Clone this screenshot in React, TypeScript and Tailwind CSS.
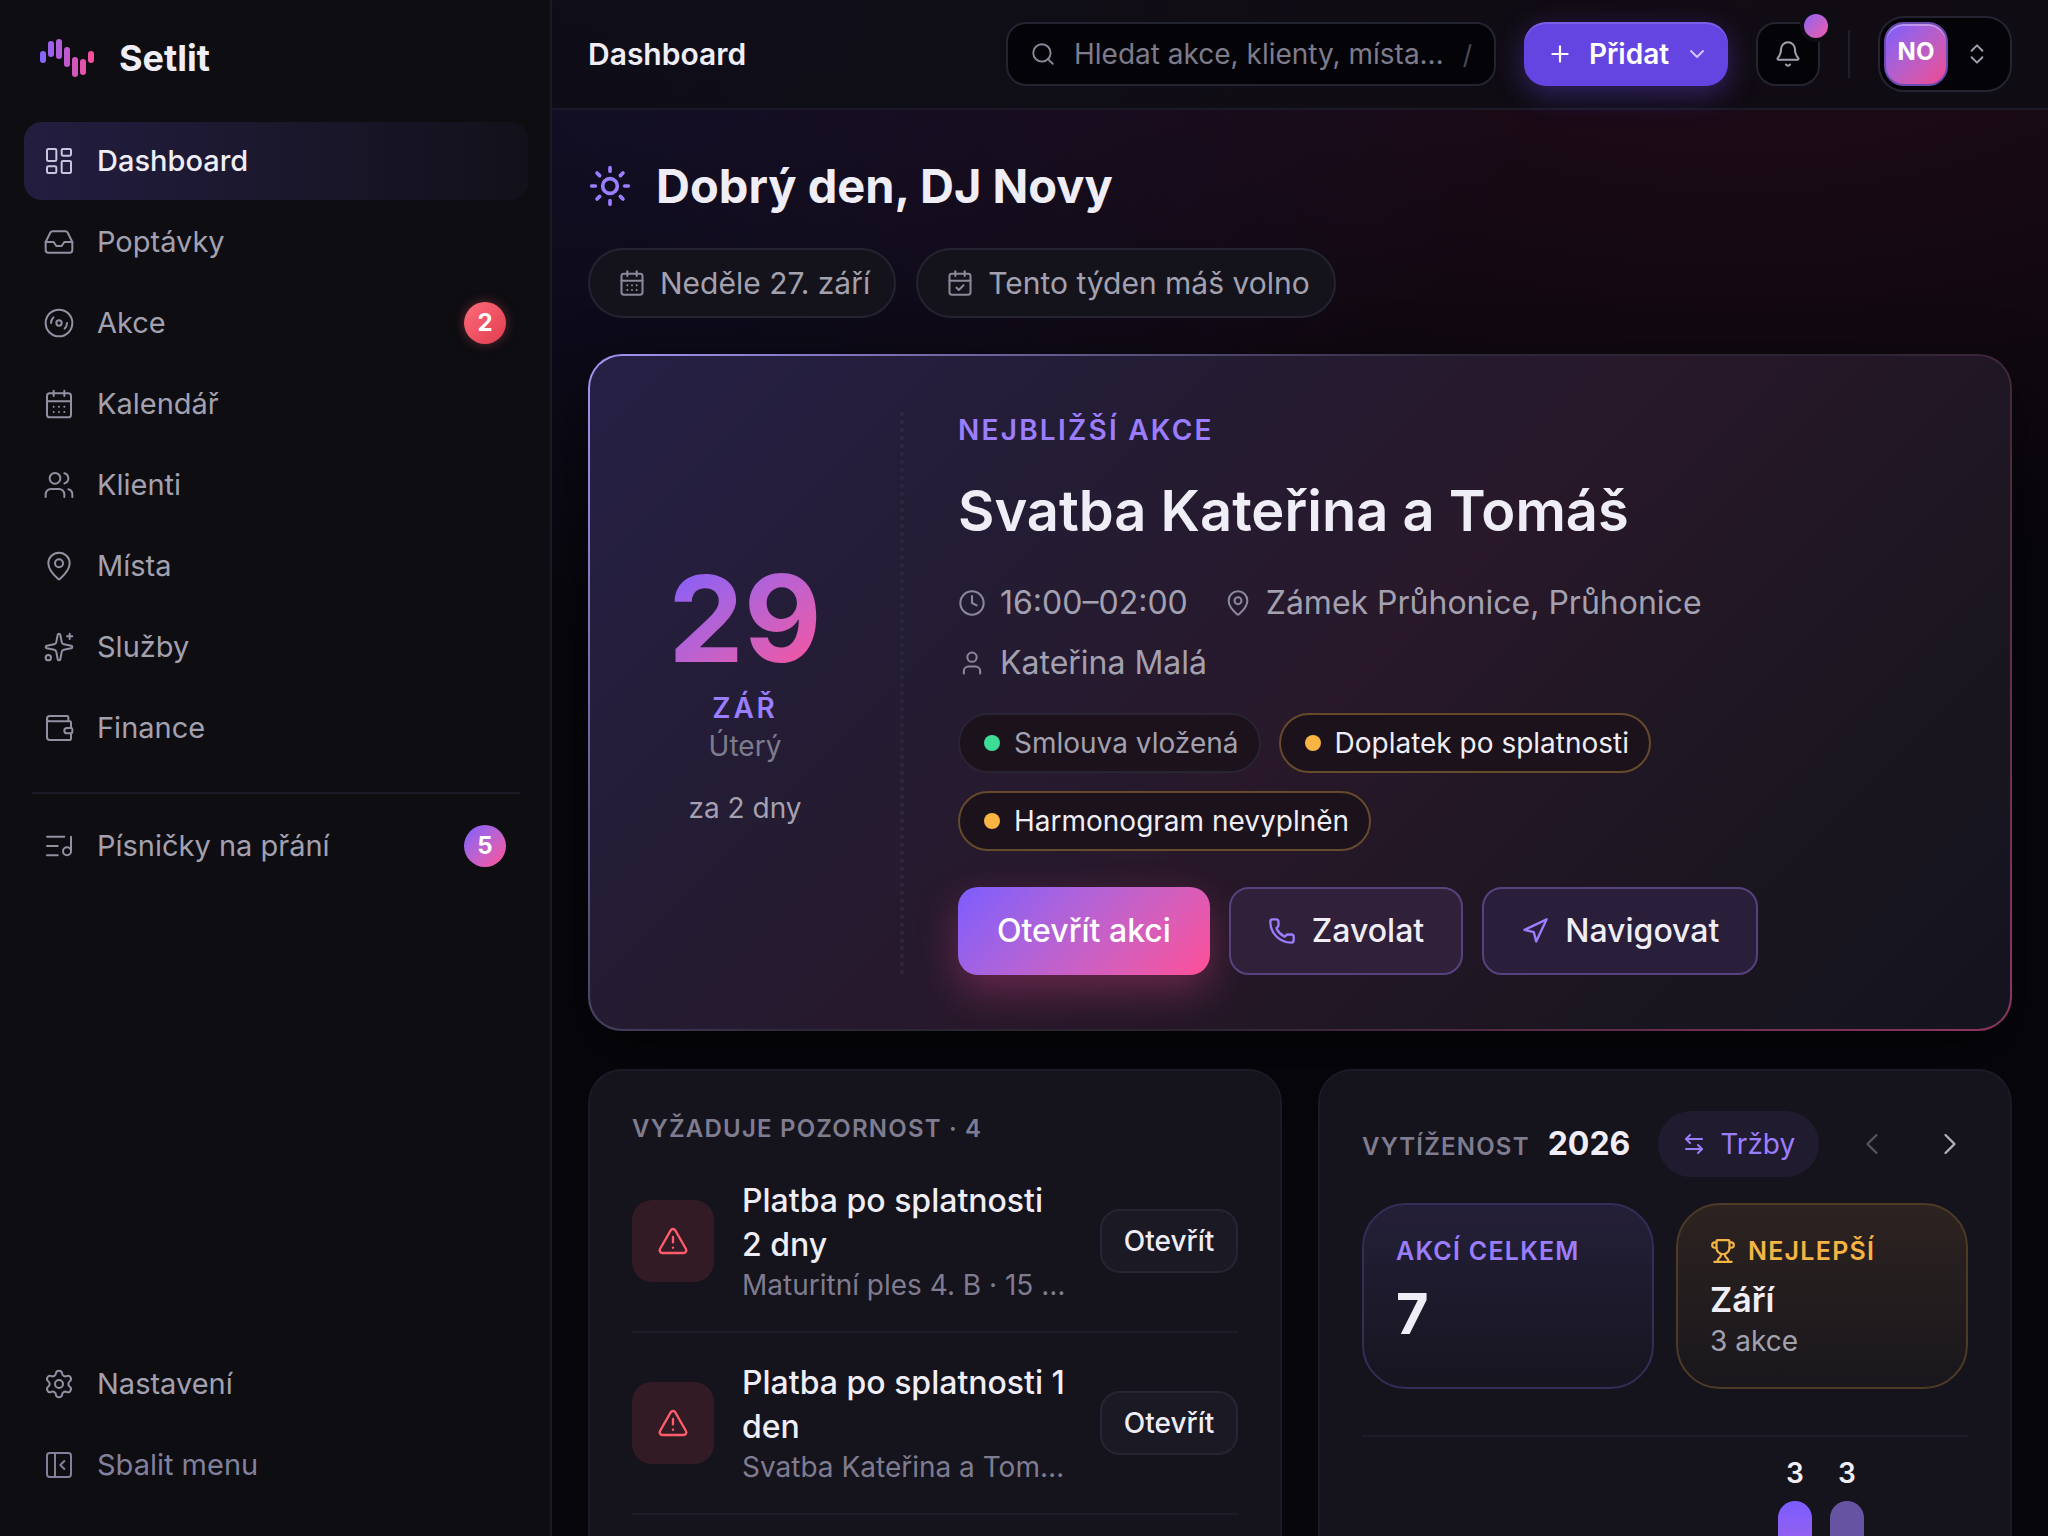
import type { ReactNode } from "react";
import {
  ArrowLeftRight,
  Bell,
  CalendarCheck,
  CalendarDays,
  ChevronDown,
  ChevronLeft,
  ChevronRight,
  ChevronsUpDown,
  Clock,
  Disc3,
  Inbox,
  LayoutDashboard,
  ListMusic,
  MapPin,
  Navigation,
  PanelLeftClose,
  Phone,
  Plus,
  Search,
  Settings,
  Sparkles,
  Sun,
  TriangleAlert,
  Trophy,
  User,
  Users,
  Wallet,
  type LucideIcon,
} from "lucide-react";

type NavEntry = {
  label: string;
  icon: LucideIcon;
  active?: boolean;
  badge?: number;
  badgeClass?: string;
};

const mainNav: NavEntry[] = [
  { label: "Dashboard", icon: LayoutDashboard, active: true },
  { label: "Poptávky", icon: Inbox },
  {
    label: "Akce",
    icon: Disc3,
    badge: 2,
    badgeClass:
      "bg-linear-to-br from-[#ff6b78] to-[#e03c50] shadow-[0_0_12px_rgba(255,92,108,0.35)]",
  },
  { label: "Kalendář", icon: CalendarDays },
  { label: "Klienti", icon: Users },
  { label: "Místa", icon: MapPin },
  { label: "Služby", icon: Sparkles },
  { label: "Finance", icon: Wallet },
];

const songsNav: NavEntry = {
  label: "Písničky na přání",
  icon: ListMusic,
  badge: 5,
  badgeClass: "bg-linear-to-br from-[#7c5cff] to-[#ff4d97]",
};

const alerts = [
  { id: 1, title: "Platba po splatnosti 2\u00a0dny", note: "Maturitní ples 4. B · 15 000 Kč" },
  { id: 2, title: "Platba po splatnosti 1 den", note: "Svatba Kateřina a Tomáš · 12 000 Kč" },
];

const months = [0, 0, 0, 0, 0, 0, 0, 0, 3, 3, 0, 1];

const LogoMark = () => (
  <svg width="54" height="40" viewBox="0 0 54 40" aria-hidden="true">
    <defs>
      <linearGradient id="logo" x1="0" y1="0" x2="54" y2="0" gradientUnits="userSpaceOnUse">
        <stop stopColor="#8467ff" />
        <stop offset="1" stopColor="#ff4d97" />
      </linearGradient>
    </defs>
    <g fill="url(#logo)">
      <rect x="0" y="13" width="6" height="12" rx="3" />
      <rect x="8" y="3" width="6" height="16" rx="3" />
      <rect x="16" y="1" width="6" height="20" rx="3" />
      <rect x="24" y="9" width="6" height="20" rx="3" />
      <rect x="32" y="19" width="6" height="20" rx="3" />
      <rect x="40" y="21" width="6" height="16" rx="3" />
      <rect x="48" y="13" width="6" height="12" rx="3" />
    </g>
  </svg>
);

const NavLink = ({ label, icon: Icon, active, badge, badgeClass }: NavEntry) => (
  <a
    href="#"
    className={`flex h-[78px] items-center gap-[22px] rounded-[18px] px-[19px] text-[29px] ${
      active
        ? "bg-linear-to-r from-[#231d40] to-[#12111a] font-medium text-[#efedf6]"
        : "text-[#a3a1b0]"
    }`}
  >
    <Icon size={32} strokeWidth={1.5} className={active ? "text-[#c9c5dc]" : "text-[#9290a1]"} />
    <span className="flex-1">{label}</span>
    {badge && (
      <span
        className={`mr-[3px] flex size-[42px] items-center justify-center rounded-full text-[24px] font-bold text-white ${badgeClass}`}
      >
        {badge}
      </span>
    )}
  </a>
);

const Sidebar = () => (
  <aside className="flex w-[552px] shrink-0 flex-col border-r-2 border-[#1a1926] bg-[#0d0d12] pr-[22px] pb-8 pl-6">
    <div className="flex h-[122px] items-center gap-[25px] px-4 pb-1.5">
      <LogoMark />
      <span className="text-[36px] font-bold text-[#efedf6]">Setlit</span>
    </div>
    <nav className="flex flex-1 flex-col gap-[3px]">
      {mainNav.map((item) => (
        <NavLink key={item.label} {...item} />
      ))}
      <hr className="mx-2 mt-[22px] mb-2.5 border-t-2 border-[#1a1926]" />
      <NavLink {...songsNav} />
    </nav>
    <div className="flex flex-col gap-[3px]">
      <NavLink label="Nastavení" icon={Settings} />
      <button
        type="button"
        className="flex h-[78px] items-center gap-[22px] px-[19px] text-[29px] text-[#82809a]"
      >
        <PanelLeftClose size={32} strokeWidth={1.5} />
        Sbalit menu
      </button>
    </div>
  </aside>
);

const Topbar = () => (
  <header className="flex h-[110px] shrink-0 items-center border-b-2 border-[#1c1a28] bg-[#0e0d13]/75 px-9">
    <p className="flex-1 text-[30px] font-semibold text-[#efedf6]">Dashboard</p>
    <label className="flex h-16 w-[490px] items-center gap-[18px] rounded-[20px] border-2 border-[#242330] bg-[#040307] px-[22px]">
      <Search size={26} strokeWidth={1.75} className="shrink-0 text-[#8a889b]" />
      <input
        type="text"
        aria-label="Hledat"
        placeholder="Hledat akce, klienty, místa…"
        className="min-w-0 flex-1 bg-transparent text-[28px] text-[#efedf6] outline-none placeholder:text-[#7d7b8c]"
      />
      <kbd className="font-[Inter,sans-serif] text-[26px] text-[#4c4a59]">/</kbd>
    </label>
    <button
      type="button"
      className="ml-7 flex h-16 w-[204px] items-center justify-center gap-4 rounded-[22px] bg-[#6445e2] pl-1 text-[28px] font-semibold text-white shadow-[inset_0_2px_0_rgba(255,255,255,0.15),0_8px_28px_rgba(100,69,226,0.4)]"
    >
      <Plus size={26} strokeWidth={2} />
      Přidat
      <ChevronDown size={24} strokeWidth={2} className="text-[#cfc6ff]" />
    </button>
    <button
      type="button"
      aria-label="Oznámení"
      className="relative ml-7 flex size-16 items-center justify-center rounded-[20px] border-2 border-[#242330] bg-[#040307] text-[#a3a1b0]"
    >
      <Bell size={28} strokeWidth={1.75} />
      <span className="absolute -top-[14px] -right-[14px] size-8 rounded-full border-4 border-[#0e0c14] bg-linear-to-br from-[#7c5cff] to-[#ff4d97] bg-origin-border" />
    </button>
    <span className="mx-7 h-12 w-0.5 bg-[#1f1e2a]" />
    <button
      type="button"
      aria-label="Účet"
      className="flex h-[76px] items-center gap-4 rounded-[26px] border-2 border-[#242330] bg-[#040307] pr-5 pl-1"
    >
      <span className="flex size-16 items-center justify-center rounded-[20px] border-2 border-[#6a4bb0] bg-linear-to-br from-[#7c5cff] to-[#f0458f] pb-1 text-[24px] font-bold text-white shadow-[inset_0_2px_0_rgba(255,255,255,0.35)]">
        NO
      </span>
      <ChevronsUpDown size={26} strokeWidth={1.75} className="text-[#a3a1b0]" />
    </button>
  </header>
);

const InfoChip = ({ icon: Icon, children }: { icon: LucideIcon; children: ReactNode }) => (
  <span className="flex h-[70px] items-center gap-[14px] rounded-full border-2 border-[#252331] bg-[#14131b] pr-6 pl-7 text-[30px] text-[#a3a1b0]">
    <Icon size={28} strokeWidth={1.75} className="text-[#8a889b]" />
    {children}
  </span>
);

const Meta = ({ icon: Icon, children }: { icon: LucideIcon; children: ReactNode }) => (
  <span className="flex items-center gap-[14px]">
    <Icon size={28} strokeWidth={1.75} className="text-[#8a889b]" />
    {children}
  </span>
);

const StatusPill = ({ ok, children }: { ok?: boolean; children: ReactNode }) => (
  <span
    className={`flex h-[60px] items-center gap-[14px] rounded-full border-2 bg-[#1b121c] pr-5 pl-6 text-[28px] ${
      ok ? "border-[#282434] text-[#a3a1b0]" : "border-[#664a2b] text-[#efedf6]"
    }`}
  >
    <span className={`size-4 rounded-full ${ok ? "bg-[#3ddc97]" : "bg-[#f8b544]"}`} />
    {children}
  </span>
);

const NextEvent = () => (
  <section className="flex rounded-[34px] border-2 border-transparent bg-[linear-gradient(135deg,#262046_0%,#241c33_30%,#28182a_52%,#1b1620_78%,#14141e_100%),linear-gradient(135deg,#a594f2_0%,#2b2838_42%,#2b2432_60%,#8f3563_100%)] bg-origin-border px-14 pt-14 pb-[54px] shadow-[0_20px_60px_rgba(0,0,0,0.5)] [background-clip:padding-box,border-box]">
    <div className="flex w-[258px] shrink-0 flex-col items-center justify-center border-r-4 border-dotted border-[#2a2a3c] pr-14">
      <span className="bg-linear-to-br from-[#7c5cff] to-[#ff4d97] bg-clip-text text-[120px] leading-[116px] font-bold text-transparent">
        29
      </span>
      <span className="mt-3 text-[28px] leading-[38px] font-semibold tracking-widest text-[#9b7dff]">
        ZÁŘ
      </span>
      <span className="text-[28px] leading-[38px] text-[#7d7b8c]">Úterý</span>
      <span className="mt-6 text-[28px] leading-[38px] text-[#a3a1b0]">za 2 dny</span>
    </div>
    <div className="flex min-w-0 flex-1 flex-col pl-[54px]">
      <p className="text-[28px] leading-9 font-semibold tracking-[0.08em] text-[#9b7dff]">
        NEJBLIŽŠÍ AKCE
      </p>
      <h2 className="mt-7 text-[56px] leading-[70px] font-semibold text-[#efedf6]">
        Svatba Kateřina a Tomáš
      </h2>
      <div className="mt-[35px] flex max-w-[820px] flex-wrap gap-x-9 gap-y-4 text-[32px] leading-[44px] text-[#a3a1b0]">
        <Meta icon={Clock}>16:00–02:00</Meta>
        <Meta icon={MapPin}>Zámek Průhonice, Průhonice</Meta>
        <Meta icon={User}>Kateřina Malá</Meta>
      </div>
      <div className="mt-7 flex max-w-[820px] flex-wrap gap-[18px]">
        <StatusPill ok>Smlouva vložená</StatusPill>
        <StatusPill>Doplatek po splatnosti</StatusPill>
        <StatusPill>Harmonogram nevyplněn</StatusPill>
      </div>
      <div className="mt-9 flex gap-[19px] text-[32px] font-medium">
        <button
          type="button"
          className="h-[88px] rounded-[20px] bg-linear-135 from-[#7c5cff] to-[#ff4d97] px-[39px] text-white shadow-[0_16px_40px_rgba(255,77,151,0.3)]"
        >
          Otevřít akci
        </button>
        <button
          type="button"
          className="flex h-[88px] items-center gap-4 rounded-[20px] border-2 border-[#57427e] bg-[#30203a] px-[37px] text-[#efedf6]"
        >
          <Phone size={28} strokeWidth={2} className="text-[#9b7dff]" />
          Zavolat
        </button>
        <button
          type="button"
          className="flex h-[88px] items-center gap-4 rounded-[20px] border-2 border-[#55427e] bg-[#2a1f3a] px-[37px] text-[#efedf6]"
        >
          <Navigation size={28} strokeWidth={2} className="text-[#9b7dff]" />
          Navigovat
        </button>
      </div>
    </div>
  </section>
);

const Attention = () => (
  <section className="rounded-[34px] border-2 border-[#1c1a27] bg-[#15131c] px-[42px] pt-10">
    <h3 className="text-[24px] leading-9 font-semibold tracking-wider text-[#7f7c90]">
      VYŽADUJE POZORNOST · 4
    </h3>
    <ul className="mt-1">
      {alerts.map((a) => (
        <li key={a.id} className="flex items-center gap-7 border-b-2 border-[#1d1b27] py-7">
          <span className="flex size-[82px] shrink-0 items-center justify-center rounded-[20px] bg-[#321b24] text-[#ff5c6c]">
            <TriangleAlert size={32} strokeWidth={1.75} />
          </span>
          <div className="min-w-0 flex-1">
            <p className="text-[32px] leading-[44px] font-medium text-[#efedf6]">{a.title}</p>
            <p className="truncate text-[28px] leading-9 text-[#7f7c90]">{a.note}</p>
          </div>
          <button
            type="button"
            className="h-16 w-[138px] shrink-0 rounded-[20px] border-2 border-[#272533] bg-[#1b1924] text-[28px] font-medium text-[#efedf6]"
          >
            Otevřít
          </button>
        </li>
      ))}
    </ul>
  </section>
);

const Workload = () => (
  <section className="rounded-[34px] border-2 border-[#1c1a27] bg-[#15131c] px-[42px] pt-10">
    <div className="flex h-[66px] items-center">
      <div className="flex items-baseline gap-[18px]">
        <h3 className="text-[24px] font-semibold tracking-wider text-[#7f7c90]">VYTÍŽENOST</h3>
        <span className="text-[32px] font-bold text-[#efedf6]">2026</span>
      </div>
      <button
        type="button"
        className="ml-7 flex h-[66px] items-center gap-[14px] rounded-full bg-[#211b30] px-6 text-[28px] text-[#9b7dff]"
      >
        <ArrowLeftRight size={24} strokeWidth={2} />
        Tržby
      </button>
      <div className="ml-auto flex gap-[42px]">
        <button type="button" aria-label="Předchozí rok" className="flex w-9 justify-center text-[#55535f]">
          <ChevronLeft size={36} strokeWidth={1.5} />
        </button>
        <button type="button" aria-label="Další rok" className="flex w-9 justify-center text-[#b5b3c0]">
          <ChevronRight size={36} strokeWidth={1.5} />
        </button>
      </div>
    </div>

    <div className="mt-[26px] grid grid-cols-2 gap-[22px]">
      <div className="h-[186px] rounded-[44px] border-2 border-[#352d57] bg-linear-to-b from-[#241f38] to-[#171520] px-8 pt-7">
        <p className="text-[25px] leading-9 font-semibold tracking-wider text-[#9b7dff]">AKCÍ CELKEM</p>
        <p className="mt-3 text-[56px] leading-[66px] font-bold text-[#efedf6]">7</p>
      </div>
      <div className="h-[186px] rounded-[44px] border-2 border-[#4d3b26] bg-linear-to-b from-[#2d2320] to-[#19171c] px-8 pt-7">
        <p className="flex items-center gap-3 text-[25px] leading-9 font-semibold tracking-wider text-[#f5b544]">
          <Trophy size={26} strokeWidth={2} />
          NEJLEPŠÍ
        </p>
        <p className="mt-2.5 text-[34px] leading-[42px] font-semibold text-[#efedf6]">Září</p>
        <p className="text-[28px] leading-10 text-[#a3a1b0]">3 akce</p>
      </div>
    </div>

    <div className="mt-[46px] grid h-[300px] grid-cols-12 items-end gap-[18px] border-t-2 border-[#1d1b27] pt-4">
      {months.map((count, i) => (
        <div key={i} className="flex h-full flex-col items-center justify-end gap-2">
          {count > 1 && <span className="text-[28px] leading-10 font-semibold text-[#efedf6]">{count}</span>}
          <span
            className={`w-full rounded-t-full ${
              i === 8 ? "bg-linear-to-b from-[#7c5cff] to-[#ff4d97]" : "bg-[#6654a3]"
            }`}
            style={{ height: `${(count / 3) * 234}px` }}
          />
        </div>
      ))}
    </div>
  </section>
);

const App = () => (
  <div className="flex h-screen overflow-hidden bg-[#07060b] bg-[radial-gradient(ellipse_48%_42%_at_28%_0%,rgba(110,85,255,0.12),transparent),radial-gradient(ellipse_60%_38%_at_85%_0%,rgba(255,60,150,0.1),transparent)] font-[Inter,sans-serif]">
    <Sidebar />
    <div className="flex min-w-0 flex-1 flex-col">
      <Topbar />
      <main className="flex-1 overflow-hidden px-9 pt-10">
        <div className="flex items-center gap-6">
          <Sun size={44} strokeWidth={2} className="text-[#9b7dff]" />
          <h1 className="text-[47px] leading-[72px] font-bold text-[#efedf6]">Dobrý den, DJ Novy</h1>
        </div>
        <div className="mt-[26px] flex gap-5">
          <InfoChip icon={CalendarDays}>Neděle 27. září</InfoChip>
          <InfoChip icon={CalendarCheck}>Tento týden máš volno</InfoChip>
        </div>
        <div className="mt-9">
          <NextEvent />
        </div>
        <div className="mt-[38px] grid grid-cols-2 gap-9">
          <Attention />
          <Workload />
        </div>
      </main>
    </div>
  </div>
);

export default App;
